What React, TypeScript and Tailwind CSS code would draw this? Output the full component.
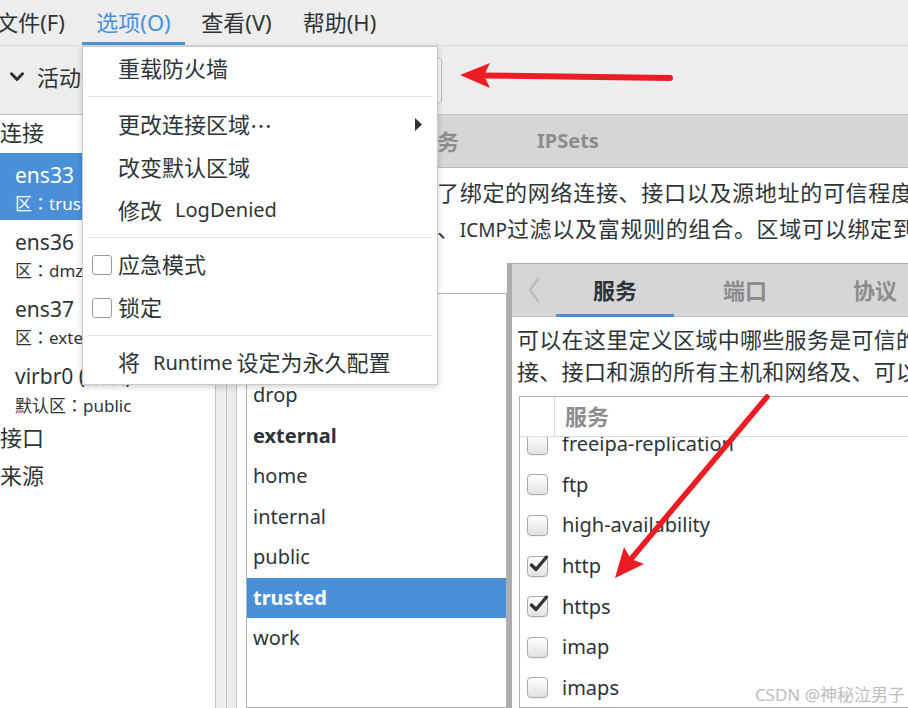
import React from 'react';

const C = ({ children, className = '' }: { children: React.ReactNode; className?: string }) => (
  <span className={`text-[22px] ${className}`}>{children}</span>
);

const Colon = () => <span className="font-['Noto_Sans_CJK_TC',sans-serif]">：</span>;

const Box = ({ checked }: { checked?: boolean }) => (
  <div className="relative w-[21px] h-[21px] shrink-0 rounded-[4px] border border-[#a9a9a9] bg-linear-to-b from-white to-[#e2e2e2] shadow-[0_1px_0_rgba(0,0,0,0.05)]">
    {checked && (
      <svg width="22" height="22" viewBox="0 0 22 22" className="absolute left-[0px] -top-[4px]">
        <path d="M3.5 12 L8 16.5 L18.5 4" fill="none" stroke="#2e3436" strokeWidth="3.4" strokeLinecap="round" strokeLinejoin="round" />
      </svg>
    )}
  </div>
);

const MenuBox = () => (
  <div className="w-[20px] h-[20px] shrink-0 rounded-[3px] border border-[#9a9a9a] bg-white" />
);

const Sep = () => (
  <div className="h-[12px] flex items-center px-[5px]">
    <div className="h-px w-full bg-[#e3e3e3]" />
  </div>
);

const LeftItem = ({ name, label, zone, sel }: { name: React.ReactNode; label: string; zone: string; sel?: boolean }) => (
  <div className={sel ? 'h-[67px] pl-[15px] pt-[8px] bg-[#4a90d9] text-white' : 'h-[67px] pl-[15px] pt-[8px]'}>
    <div className="leading-[28px] text-[21px]">{name}</div>
    <div className="leading-[28px] text-[17px]">
      {label}
      <Colon />
      {zone}
    </div>
  </div>
);

const zones = ['block', 'dmz', 'drop', 'external', 'home', 'internal', 'public', 'trusted', 'work'];
const services: [string, boolean][] = [
  ['freeipa-replication', false],
  ['ftp', false],
  ['high-availability', false],
  ['http', true],
  ['https', true],
  ['imap', false],
  ['imaps', false],
  ['ipp', false],
];

export default function App() {
  return (
    <div className="relative w-[908px] h-[708px] overflow-hidden bg-[#ededed] text-[#2e3436] font-['Noto_Sans','Noto_Sans_CJK_SC',sans-serif] select-none">
      {/* Menu bar */}
      <div className="h-[46px] flex -ml-[21px] border-b border-[#dcdcdc] text-[22px]">
        <div className="w-[103px] h-full flex items-center justify-center">文件(F)</div>
        <div className="w-[103px] h-full flex items-center justify-center text-[#4a90d9] border-b-[3px] border-[#4a90d9] pt-[3px]">选项(O)</div>
        <div className="w-[103px] h-full flex items-center justify-center">查看(V)</div>
        <div className="w-[103px] h-full flex items-center justify-center">帮助(H)</div>
      </div>

      {/* Toolbar */}
      <div className="h-[69px] flex items-center border-b border-[#c2c2c2]">
        <div className="w-[300px] shrink-0 flex items-center pl-[10px] gap-[13px] -mt-[6px]">
          <svg width="14" height="10" viewBox="0 0 14 10">
            <path d="M1.5 1.8 L7 7.5 L12.5 1.8" fill="none" stroke="#2e3436" strokeWidth="3" strokeLinecap="round" strokeLinejoin="round" />
          </svg>
          <C>活动绑定</C>
        </div>
        <div className="w-[142px] shrink-0 h-[47px] rounded-[5px] border border-[#b9b9b9] bg-[#f8f8f8] flex items-center px-[12px] gap-[8px]">
          <C>运行时</C>
        </div>
      </div>

      {/* Main */}
      <div className="flex h-[593px]">
        {/* Left panel */}
        <div className="w-[216px] shrink-0 bg-white border-r border-[#c4c4c4] flex flex-col whitespace-nowrap overflow-hidden">
          <div className="h-[38px] flex items-center pb-[4px]">
            <C>连接</C>
          </div>
          <LeftItem name="ens33" label="区" zone="trusted" sel />
          <LeftItem name="ens36" label="区" zone="dmz" />
          <LeftItem name="ens37" label="区" zone="external" />
          <LeftItem name={<>virbr0 (<span className="text-[20px]">默认</span>)</>} label="默认区" zone="public" />
          <div className="h-[36px] -mt-[2px] flex items-center">
            <C>接口</C>
          </div>
          <div className="h-[40px] flex items-center">
            <C>来源</C>
          </div>
        </div>

        {/* Pane separators */}
        <div className="w-[11px] shrink-0 bg-[#ececec] border-r border-[#c4c4c4]" />
        <div className="w-[10px] shrink-0 bg-[#ececec] border-r border-[#c4c4c4]" />

        {/* Notebook */}
        <div className="flex-1 flex flex-col min-w-0">
          <div className="h-[53px] shrink-0 bg-[#d6d6d6] border-b border-[#b9b9b9] flex items-center pl-[17px] font-bold whitespace-nowrap">
            <div className="px-[39px] shrink-0 text-[#2e3436]"><C>区域</C></div>
            <div className="px-[39px] shrink-0 text-[#8c8c8c]"><C>服务</C></div>
            <div className="px-[39px] shrink-0 text-[#8c8c8c] text-[20px]">IPSets</div>
          </div>

          <div className="flex-1 bg-white flex flex-col overflow-hidden whitespace-nowrap min-h-0">
            <div className="pl-[16px] pt-[6px] leading-[36px] text-[22px]">
              <div className="tracking-[0.7px]">
                <span className="inline-block w-[184px] overflow-hidden align-top tracking-normal">FirewallD 区域定义</span>
                了绑定的网络连接、接口以及源地址的可信程度。区域是服务、端口、协议、IP伪装、
              </div>
              <div className="tracking-[0.7px]">
                <span className="inline-block w-[184px] overflow-hidden align-top tracking-normal">端口/报文转发</span>
                、<span className="text-[19px] tracking-normal">ICMP</span>过滤以及富规则的组合。区域可以绑定到接口以及源地址。
              </div>
            </div>

            <div className="mt-[15px] flex flex-1 min-h-0">
              {/* Zone list */}
              <div className="w-[270px] shrink-0 pl-[9px] pt-[30px] flex flex-col">
                <div className="flex-1 border border-[#b3b3b3] bg-white text-[20px]">
                  {zones.map((z) => (
                    <div
                      key={z}
                      className={
                        z === 'trusted'
                          ? 'h-[40.5px] flex items-center pl-[6px] bg-[#4a90d9] text-white font-bold'
                          : z === 'external'
                          ? 'h-[40.5px] flex items-center pl-[6px] font-bold'
                          : 'h-[40.5px] flex items-center pl-[6px]'
                      }
                    >
                      {z}
                    </div>
                  ))}
                </div>
              </div>

              {/* Services panel */}
              <div className="flex-1 min-w-0 overflow-hidden border-l-[5px] border-t border-[#acacac] flex flex-col">
                <div className="h-[53px] shrink-0 bg-[#d6d6d6] border-b border-[#c2c2c2] flex items-stretch font-bold">
                  <div className="w-[44px] shrink-0 flex items-center justify-center">
                    <svg width="12" height="26" viewBox="0 0 12 26">
                      <path d="M10 2 L2 13 L10 24" fill="none" stroke="#bcbcbc" strokeWidth="2.4" strokeLinecap="round" strokeLinejoin="round" />
                    </svg>
                  </div>
                  <div className="flex shrink-0 gap-[12px]">
                    <div className="w-[118px] shrink-0 flex items-center justify-center border-b-[3px] border-[#4a90d9] pt-[3px] -mb-px text-[#2e3436]">
                      <C>服务</C>
                    </div>
                    <div className="w-[118px] shrink-0 flex items-center justify-center text-[#8c8c8c]">
                      <C>端口</C>
                    </div>
                    <div className="w-[118px] shrink-0 flex items-center justify-center text-[#8c8c8c]">
                      <C>协议</C>
                    </div>
                  </div>
                </div>

                <div className="flex-1 bg-white flex flex-col min-h-0">
                  <div className="pl-[5px] pt-[6px] leading-[32px] text-[22px] tracking-[0.3px]">
                    <div>可以在这里定义区域中哪些服务是可信的。可信的服务可以被绑定到区域的连</div>
                    <div>接、接口和源的所有主机和网络及、可以访问。</div>
                  </div>
                  <div className="mt-[9px] ml-[7px] w-[420px] shrink-0 flex-1 border border-[#b3b3b3] flex flex-col min-h-0">
                    <div className="h-[40px] shrink-0 flex border-b border-[#dcdcdc]">
                      <div className="w-[35px] border-r border-[#dcdcdc]" />
                      <div className="pl-[10px] flex items-center text-[#8c8c8c] font-bold">
                        <C>服务</C>
                      </div>
                    </div>
                    <div className="flex-1 overflow-hidden">
                      <div className="-mt-[13px]">
                        {services.map(([s, c]) => (
                          <div key={s} className="h-[40.6px] flex items-center pl-[7px] gap-[14px] text-[20px]">
                            <Box checked={c} />
                            <span>{s}</span>
                          </div>
                        ))}
                      </div>
                    </div>
                  </div>
                </div>
              </div>
            </div>
          </div>
        </div>
      </div>

      {/* Dropdown menu */}
      <div className="absolute left-[82px] top-[46px] w-[356px] h-[339px] bg-white border border-[#c9c9c9] shadow-[0_2px_6px_rgba(0,0,0,0.18)] flex flex-col whitespace-nowrap">
        <div className="h-[44px] flex items-center pl-[35px]">
          <C>重载防火墙</C>
        </div>
        <Sep />
        <div className="h-[43px] flex items-center pl-[35px] pr-[14px]">
          <C>更改连接区域</C>
          <span className="text-[22px] font-['Noto_Sans_CJK_TC',sans-serif]">⋯</span>
          <svg width="8" height="13" viewBox="0 0 8 13" className="ml-auto">
            <polygon points="0,0 7,6.5 0,13" fill="#2e3436" />
          </svg>
        </div>
        <div className="h-[43px] flex items-center pl-[35px]">
          <C>改变默认区域</C>
        </div>
        <div className="h-[43px] flex items-center pl-[35px]">
          <C>修改</C>
          <span className="ml-[13px] text-[20px]">LogDenied</span>
        </div>
        <Sep />
        <div className="h-[43px] flex items-center pl-[9px] gap-[6px]">
          <MenuBox />
          <C>应急模式</C>
        </div>
        <div className="h-[43px] flex items-center pl-[9px] gap-[6px]">
          <MenuBox />
          <C>锁定</C>
        </div>
        <Sep />
        <div className="h-[43px] flex items-center pl-[35px]">
          <C>将</C>
          <span className="ml-[13px] mr-[4px] text-[20px]">Runtime</span>
          <C>设定为永久配置</C>
        </div>
      </div>

      {/* Watermark */}
      <div className="absolute right-[3px] bottom-[5px] text-[17px] text-[#bdbdbd] leading-none">CSDN @神秘泣男子</div>

      {/* Annotation arrows */}
      <svg className="absolute inset-0 pointer-events-none" width="908" height="708" viewBox="0 0 908 708">
        <line x1="670" y1="78" x2="482" y2="75.5" stroke="#ec1c24" strokeWidth="6" strokeLinecap="round" />
        <polygon points="460,75 490,63 484,75.5 490,88" fill="#ec1c24" />
        <line x1="767" y1="397" x2="631" y2="559" stroke="#ec1c24" strokeWidth="5.5" strokeLinecap="round" />
        <polygon points="615,578 624,547 631,559 644,564" fill="#ec1c24" />
      </svg>
    </div>
  );
}
